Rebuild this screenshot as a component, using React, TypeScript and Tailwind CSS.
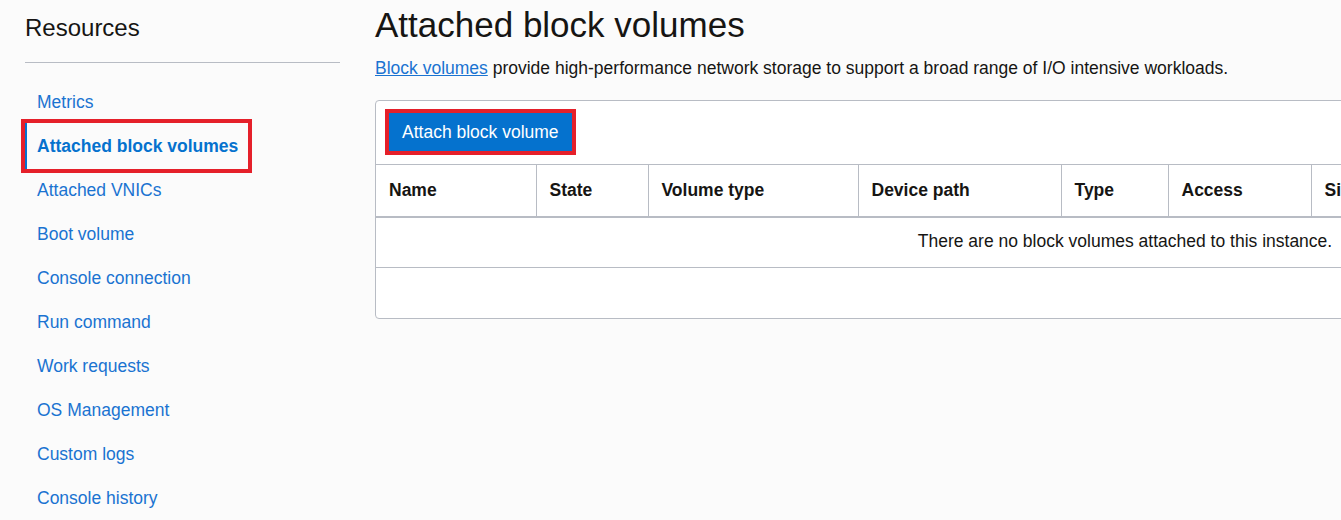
const navItems = [
  "Metrics",
  "Attached block volumes",
  "Attached VNICs",
  "Boot volume",
  "Console connection",
  "Run command",
  "Work requests",
  "OS Management",
  "Custom logs",
  "Console history",
];

const columns = [
  { label: "Name", className: "w-[160px]" },
  { label: "State", className: "w-[112px]" },
  { label: "Volume type", className: "w-[210px]" },
  { label: "Device path", className: "w-[203px]" },
  { label: "Type", className: "w-[107px]" },
  { label: "Access", className: "w-[143px]" },
  { label: "Size", className: "" },
];

export default function App() {
  return (
    <div
      className="flex h-[520px] w-[1341px] overflow-hidden bg-[#fbfbfb] pl-[25px] text-[#161513]"
      style={{ fontFamily: '"Liberation Sans", Arial, sans-serif' }}
    >
      {/* Sidebar */}
      <aside className="w-[315px] shrink-0">
        <h2 className="pt-[13px] text-[24px] leading-[30px] font-normal">Resources</h2>
        <div className="mt-[19px] h-px bg-[#b8bcc4]" />
        <nav className="mt-[17px] flex flex-col">
          {navItems.map((item) => {
            const active = item === "Attached block volumes";
            return (
              <div key={item} className="flex h-[44px] items-center">
                {active ? (
                  <a className="flex h-[46px] w-[223px] items-center border-l-[2px] border-[#0572ce] pl-[10px] text-[17.5px] font-bold text-[#0572ce] outline-4 outline-[#e5202a]">
                    {item}
                  </a>
                ) : (
                  <a className="pl-[12px] text-[17.5px] text-[#1a73d1]">{item}</a>
                )}
              </div>
            );
          })}
        </nav>
      </aside>

      {/* Main */}
      <main className="ml-[35px] min-w-0 flex-1">
        <h1 className="pt-[5px] text-[35px] leading-[40px] font-normal">Attached block volumes</h1>
        <p className="mt-[13px] text-[17.5px] leading-[20px]">
          <a className="text-[#1a73d1] underline">Block volumes</a> provide high-performance network
          storage to support a broad range of I/O intensive workloads.
        </p>

        <div className="mt-[22px] w-[1500px] rounded-[4px] border border-[#b8bcc4] bg-white">
          <div className="flex h-[63px] items-start pt-[12px] pl-[13px]">
            <button className="h-[38px] bg-[#0572ce] px-[13px] text-[17.5px] text-white outline-4 outline-[#e5202a]">
              Attach block volume
            </button>
          </div>
          <table className="w-full border-collapse">
            <thead>
              <tr className="h-[52px] border-t border-b-2 border-[#b8bcc4]">
                {columns.map((col, i) => (
                  <th
                    key={col.label}
                    className={`${col.className} ${i > 0 ? "border-l border-[#b8bcc4]" : ""} px-[13px] text-left text-[17.5px] font-bold`}
                  >
                    {col.label}
                  </th>
                ))}
              </tr>
            </thead>
            <tbody>
              <tr className="h-[51px] border-b border-[#b8bcc4]">
                <td colSpan={7} className="pb-[2px] text-center text-[17.5px]">
                  There are no block volumes attached to this instance.
                </td>
              </tr>
              <tr className="h-[50px]">
                <td colSpan={7} />
              </tr>
            </tbody>
          </table>
        </div>
      </main>
    </div>
  );
}
